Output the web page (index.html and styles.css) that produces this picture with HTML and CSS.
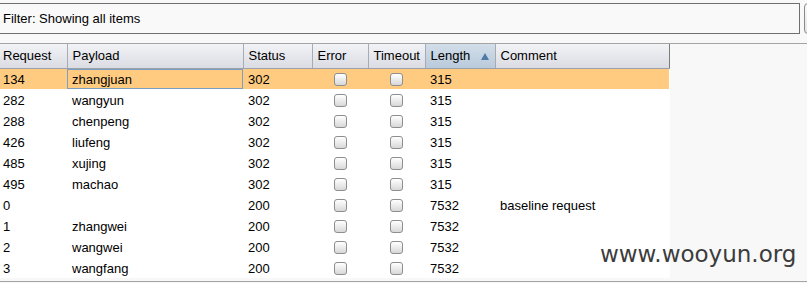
FILE: index.html
```html
<!DOCTYPE html>
<html lang="en">

<head>
    <meta charset="UTF-8">
    <title>Intruder results</title>
    <link rel="stylesheet" href="styles.css">
</head>

<body>
    <div class="filter-bar">
        <div class="filter">Filter: Showing all items</div>
        <button class="filter-help"></button>
    </div>
    <div class="results">
        <table class="grid">
            <thead>
                <tr>
                    <th class="col-req">Request</th>
                    <th class="col-payload">Payload</th>
                    <th class="col-status">Status</th>
                    <th class="col-error">Error</th>
                    <th class="col-timeout">Timeout</th>
                    <th class="col-length sorted">Length <span class="sort-arrow"></span></th>
                    <th class="col-comment">Comment</th>
                </tr>
            </thead>
            <tbody>
                <tr class="selected">
                    <td>134</td><td class="focus">zhangjuan</td><td>302</td>
                    <td class="check"><span class="box"></span></td><td class="check"><span class="box"></span></td>
                    <td>315</td><td></td>
                </tr>
                <tr>
                    <td>282</td><td>wangyun</td><td>302</td>
                    <td class="check"><span class="box"></span></td><td class="check"><span class="box"></span></td>
                    <td>315</td><td></td>
                </tr>
                <tr>
                    <td>288</td><td>chenpeng</td><td>302</td>
                    <td class="check"><span class="box"></span></td><td class="check"><span class="box"></span></td>
                    <td>315</td><td></td>
                </tr>
                <tr>
                    <td>426</td><td>liufeng</td><td>302</td>
                    <td class="check"><span class="box"></span></td><td class="check"><span class="box"></span></td>
                    <td>315</td><td></td>
                </tr>
                <tr>
                    <td>485</td><td>xujing</td><td>302</td>
                    <td class="check"><span class="box"></span></td><td class="check"><span class="box"></span></td>
                    <td>315</td><td></td>
                </tr>
                <tr>
                    <td>495</td><td>machao</td><td>302</td>
                    <td class="check"><span class="box"></span></td><td class="check"><span class="box"></span></td>
                    <td>315</td><td></td>
                </tr>
                <tr>
                    <td>0</td><td></td><td>200</td>
                    <td class="check"><span class="box"></span></td><td class="check"><span class="box"></span></td>
                    <td>7532</td><td>baseline request</td>
                </tr>
                <tr>
                    <td>1</td><td>zhangwei</td><td>200</td>
                    <td class="check"><span class="box"></span></td><td class="check"><span class="box"></span></td>
                    <td>7532</td><td></td>
                </tr>
                <tr>
                    <td>2</td><td>wangwei</td><td>200</td>
                    <td class="check"><span class="box"></span></td><td class="check"><span class="box"></span></td>
                    <td>7532</td><td></td>
                </tr>
                <tr>
                    <td>3</td><td>wangfang</td><td>200</td>
                    <td class="check"><span class="box"></span></td><td class="check"><span class="box"></span></td>
                    <td>7532</td><td></td>
                </tr>
            </tbody>
        </table>
        <div class="watermark">www.wooyun.org</div>
    </div>
</body>

</html>
```

FILE: styles.css
```css
body {
    margin: 0;
    background-color: #f8f8f8;
    font-family: "Liberation Sans", Arial, sans-serif;
    font-size: 13px;
    color: #000;
    overflow: hidden;
}

.filter-bar {
    display: flex;
    align-items: flex-start;
    gap: 4px;
    height: 43px;
    padding-top: 3px;
    box-sizing: border-box;
    margin-left: -1px;
}

.filter {
    flex: 0 0 801px;
    height: 31px;
    box-sizing: border-box;
    border: 1px solid #6f6f6f;
    background-color: #f9f9f9;
    padding: 0 3px;
    line-height: 29px;
}

.filter-help {
    flex: 0 0 24px;
    height: 31px;
    border: 1px solid #8a8a8a;
    border-radius: 4px;
    background: linear-gradient(#fafafa, #e4e4e4);
    padding: 0;
}

.results {
    position: relative;
    height: 237px;
    overflow: hidden;
    border-top: 1px solid #a4a4a4;
    border-bottom: 1px solid #a4a4a4;
}

.grid {
    border-collapse: collapse;
    table-layout: fixed;
    width: 669px;
    background-color: #fff;
}

.grid th {
    height: 24px;
    padding: 0 0 0 5px;
    font-weight: normal;
    text-align: left;
    white-space: nowrap;
    background: linear-gradient(#f2f3f6, #dadce3);
    border-right: 1px solid #a8abb3;
    border-bottom: 1px solid #9da0a8;
    box-sizing: border-box;
}

.grid th:last-child {
    border-right: 1px solid #7c7c7c;
}

.grid th.sorted {
    background: linear-gradient(#d2dee9, #b9cadb);
    position: relative;
}

.sort-arrow {
    position: absolute;
    right: 6px;
    top: 9px;
    width: 0;
    height: 0;
    border-left: 4px solid transparent;
    border-right: 4px solid transparent;
    border-bottom: 7px solid #4f7ba6;
}

.col-req { width: 67px; }
.col-payload { width: 176px; }
.col-status { width: 69px; }
.col-error { width: 56px; }
.col-timeout { width: 57px; }
.col-length { width: 70px; }
.col-comment { width: 174px; }

.grid td {
    height: 21px;
    padding: 1px 0 0 5px;
    white-space: nowrap;
    box-sizing: border-box;
}

.grid th:first-child,
.grid td:first-child {
    padding-left: 3px;
}

.grid tr.selected td {
    background-color: #ffcb80;
}

.grid td.focus {
    box-shadow: inset 0 0 0 1px #7c9ec0;
}

.grid td.check {
    padding: 0;
    text-align: center;
}

.box {
    display: inline-block;
    width: 13px;
    height: 13px;
    box-sizing: border-box;
    border: 1px solid #8e8e8e;
    border-radius: 3px;
    background: linear-gradient(#ffffff, #d8d8d8);
    vertical-align: middle;
}

.watermark {
    position: absolute;
    left: 600px;
    top: 197px;
    font-family: "DejaVu Sans", Verdana, sans-serif;
    font-size: 23px;
    color: #3c3c3c;
}
```
